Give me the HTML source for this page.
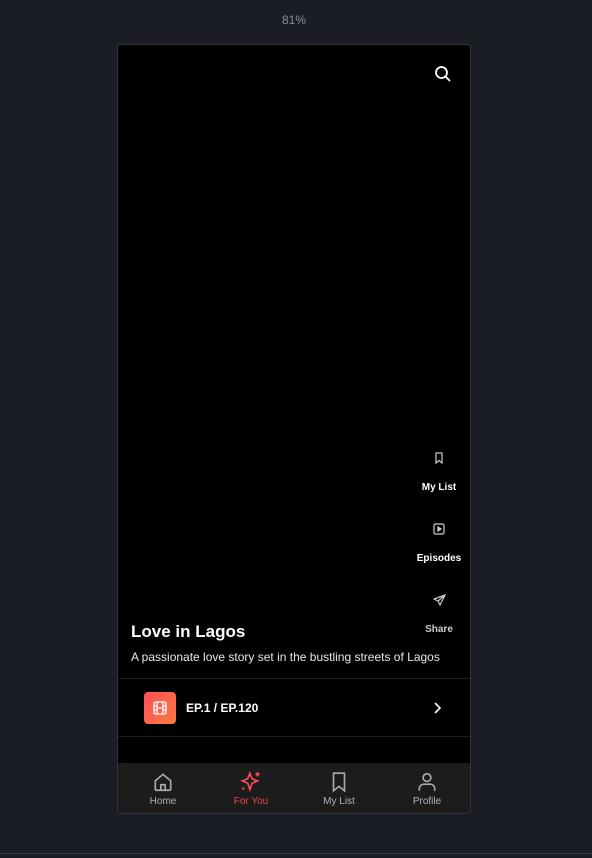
<!DOCTYPE html>
<html><head><style>
*{margin:0;padding:0;box-sizing:border-box}
body{width:592px;height:858px;background:#1b1d24;font-family:"Liberation Sans",sans-serif;position:relative;overflow:hidden}
.pct{position:absolute;top:13px;left:0;width:588px;text-align:center;font-size:12px;color:#8b8f99}
.phone{position:absolute;left:117px;top:44px;width:354px;height:770px;background:#000;border:1px solid #33353d;border-radius:4px;overflow:hidden}
.act{position:absolute;left:290px;width:62px;text-align:center;color:#fff;font-size:10px;font-weight:bold}
.act svg{display:block;margin:0 auto 18px}
.title{position:absolute;left:13px;top:577px;color:#fff;font-size:17px;font-weight:bold}
.desc{position:absolute;left:13px;top:605px;color:#e8e8e8;font-size:12px}
.ep{position:absolute;left:0;top:633px;width:354px;height:59px;border-top:1px solid #1e1e1e;border-bottom:1px solid #1e1e1e}
.epi{position:absolute;left:26px;top:13px;width:32px;height:32px;border-radius:4px;background:linear-gradient(135deg,#ff4d5a,#ff7a3d)}
.ept{position:absolute;left:68px;top:22px;color:#fff;font-size:12px;font-weight:bold}
.nav{position:absolute;left:0;top:718px;width:354px;height:52px;background:#1c1c1c}
.ni{position:absolute;top:0;width:88px;text-align:center;font-size:10px;color:#a9b4c2}
.ni svg{display:block;margin:8px auto 3px}
</style></head><body>
<div class="pct">81%</div>
<div class="phone">
<svg style="position:absolute;left:316px;top:20px" width="18" height="18" viewBox="0 0 18 18" fill="none" stroke="#fff" stroke-width="1.8"><circle cx="7.5" cy="7.5" r="5.5"/><path d="M11.5 11.5l4.5 4.5"/></svg>
<div class="act" style="top:407px"><svg width="12" height="12" viewBox="0 0 12 12" fill="none" stroke="#ccc" stroke-width="1.2"><path d="M3 1h6v10L6 8.5 3 11z"/></svg>My List</div>
<div class="act" style="top:478px"><svg width="12" height="12" viewBox="0 0 12 12" fill="none" stroke="#ccc" stroke-width="1.2"><rect x="1" y="1" width="10" height="10" rx="1.5"/><path d="M5 4v4l3-2z" fill="#ccc"/></svg>Episodes</div>
<div class="act" style="top:549px;color:#ccc"><svg width="13" height="12" viewBox="0 0 13 12" fill="none" stroke="#ccc" stroke-width="1.2"><path d="M12 1L1 5l4 2 2 4zM5 7l7-6"/></svg>Share</div>
<div class="title">Love in Lagos</div>
<div class="desc">A passionate love story set in the bustling streets of Lagos</div>
<div class="ep"><div class="epi"><svg width="32" height="32" viewBox="0 0 32 32" fill="none" stroke="#fff" stroke-width="1.3"><rect x="10" y="10" width="12" height="12" rx="1.5"/><path d="M13 10v12M19 10v12M10 14h3M10 18h3M19 14h3M19 18h3M13 16h6"/></svg></div><div class="ept">EP.1 / EP.120</div>
<svg style="position:absolute;left:315px;top:23px" width="8" height="12" viewBox="0 0 8 12" fill="none" stroke="#fff" stroke-width="1.6"><path d="M2 1l5 5-5 5"/></svg></div>
<div class="nav">
<div class="ni" style="left:1px"><svg width="22" height="22" viewBox="0 0 20 20" fill="none" stroke="#aaa" stroke-width="1.5"><path d="M3 9l7-6 7 6v7.5a1 1 0 01-1 1H4a1 1 0 01-1-1z"/><path d="M8 17.5v-5h4v5"/></svg>Home</div>
<div class="ni" style="left:89px;color:#e5484d"><svg width="24" height="22" viewBox="0 0 22 20" fill="none" stroke="#ff4d57" stroke-width="1.5"><path d="M10 2l2 5 5 2-5 2-2 6-2-6-5-2 5-2z"/><path d="M17 1v4M15 3h4M4 15v2M3 16h2"/></svg>For You</div>
<div class="ni" style="left:177px"><svg width="22" height="22" viewBox="0 0 20 20" fill="none" stroke="#aaa" stroke-width="1.5"><path d="M5 2h10v16l-5-4-5 4z"/></svg>My List</div>
<div class="ni" style="left:265px"><svg width="22" height="22" viewBox="0 0 20 20" fill="none" stroke="#aaa" stroke-width="1.5"><circle cx="10" cy="6" r="3.5"/><path d="M3 18v-2a4 4 0 014-4h6a4 4 0 014 4v2"/></svg>Profile</div>
</div>
</div>
<div style="position:absolute;left:0;top:853px;width:592px;height:1px;background:#3a3c44"></div>
</body></html>
